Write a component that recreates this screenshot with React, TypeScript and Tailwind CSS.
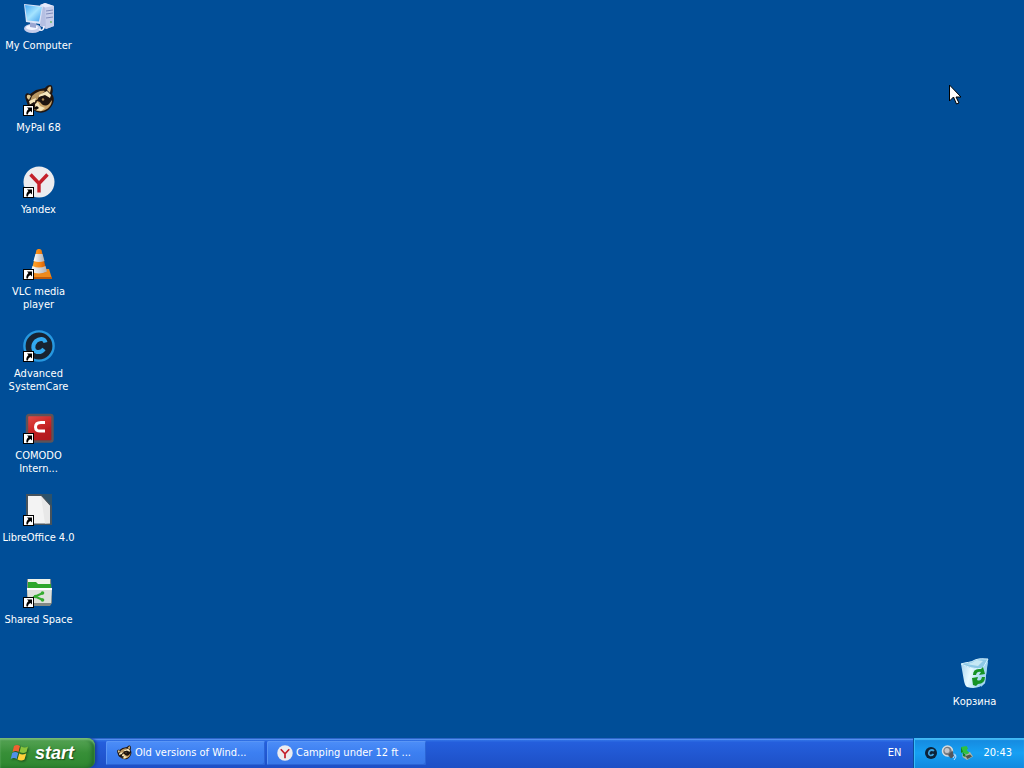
import type { ReactNode } from 'react';

function ShortcutArrow() {
  return (
    <g>
      <rect x="0.5" y="21.5" width="10" height="10" fill="#fff" stroke="#000" />
      <path d="M4 23.500h5v5l-1.500-1.500C5.500 28 5 29 5 30.500H3.500C3 28.500 3.700 26.700 5.500 25Z" fill="#000" />
    </g>
  );
}

function ComputerIcon() {
  return (
    <svg viewBox="0 0 32 32" className="size-8" aria-hidden="true">
      <defs>
        <linearGradient id="screen" x1="0" y1="0" x2="1" y2="1">
          <stop offset="0" stopColor="#45a9f5" />
          <stop offset="0.5" stopColor="#a5e4ff" />
          <stop offset="1" stopColor="#3c9cec" />
        </linearGradient>
      </defs>
      <path d="M17 3 22 1 31 4v20l-8 3-6-3Z" fill="#b5bfe2" />
      <path d="M22 5 31 4v20l-8 3Z" fill="#c5cdea" />
      <path d="M17 3 22 1 31 4 22 5.500Z" fill="#e6eafa" />
      <path d="m23 9 7-1M23 12l7-1M23 16l7-1" stroke="#7f8cbc" />
      <circle cx="28" cy="20" r="1" fill="#6fb96a" />
      <ellipse cx="9.500" cy="26.500" rx="8.500" ry="4.500" fill="#c6cdea" />
      <ellipse cx="9" cy="25.500" rx="6" ry="2.500" fill="#f3f5ff" />
      <path d="m7 20 6 1v5l-6-1Z" fill="#9ba7d2" />
      <path d="M1 2 20 4 17 22 3 20Z" fill="#dbe4f8" />
      <path d="M2 3 19 5 16 19.500 4 18.500Z" fill="url(#screen)" />
      <path d="M16 27c3 3 5 0 5-3" fill="none" stroke="#eef2ff" strokeWidth="1.500" />
    </svg>
  );
}

function Raccoon() {
  return (
    <g>
      <path d="M3 16C1 11 3 8 7 10L13 6 22 4C24 1 28 0 29 2c1 3 1 6 0 8 3 4 2 9-1 13-4 6-11 7-16 4L5 22Z" fill="#21150f" />
      <path d="M4 14c-1-4 2-4 4-2l-2 4Z" fill="#dcc48c" />
      <path d="M24 6c1-3 4-5 4-2l-1 5Z" fill="#e0c084" />
      <path d="M9 12c4-4 9-6 13-5l-5 5-3 4-7 1Z" fill="#b99762" />
      <path d="m6 17 7-3-1 4-5 3Z" fill="#f3e3b8" />
      <path d="m16 11 8-4 4 4-1 3-5-3-6 2Z" fill="#f6e8bf" />
      <path d="m14 17 3 1c2 3 5 5 9 2l3-4c0 5-4 10-10 11-4 1-7-1-8-2Z" fill="#caa368" />
      <path d="m12 20 3-2 2 4 5 2-4 3-5-1Z" fill="#f4e3b8" />
      <path d="M15 14c4-3 9-2 12 1l-2 5c-4 2-8-1-10-6Z" fill="#1c1310" />
      <path d="m6 21 5-3 1 4-4 2Z" fill="#1c1310" />
      <circle cx="20" cy="15.500" r="1.200" fill="#a88754" />
      <path d="m10 24 4-2 2 2-3 2Z" fill="#0d0908" />
    </g>
  );
}

function YandexMark() {
  return (
    <g>
      <circle cx="16" cy="16" r="15.500" fill="#ececef" />
      <path d="m7.500 8.500 8.500 9 8.500-9M16 16v10.500" fill="none" stroke="#c4202a" strokeWidth="3.400" />
    </g>
  );
}

function ConeIcon() {
  return (
    <svg viewBox="0 0 32 32" className="size-8" aria-hidden="true">
      <defs>
        <linearGradient id="cone">
          <stop offset="0" stopColor="#ffac32" />
          <stop offset="0.550" stopColor="#f68512" />
          <stop offset="1" stopColor="#c85708" />
        </linearGradient>
        <linearGradient id="cone-band">
          <stop offset="0" stopColor="#fff" />
          <stop offset="1" stopColor="#aeb1b6" />
        </linearGradient>
      </defs>
      <path d="M6 21h20l3 9.500H4Z" fill="#ee8a1d" />
      <path d="M4 29h25v2H4Z" fill="#bf5b0c" />
      <path d="M13.500 2c1-1.500 4-1.500 5 0L23.500 23c-3 4-12 4-15 0Z" fill="url(#cone)" />
      <path d="m12.500 6 7 0 2 7q-5.500 2-11 0Z" fill="url(#cone-band)" />
      <path d="m9.500 18q6.500 3 13 0l1.500 5.500q-8 4-16 0Z" fill="url(#cone-band)" />
      <ShortcutArrow />
    </svg>
  );
}

function SystemCareIcon() {
  return (
    <svg viewBox="0 0 32 32" className="size-8" aria-hidden="true">
      <circle cx="16" cy="16" r="14.600" fill="#182331" stroke="#2698e0" strokeWidth="2.400" />
      <path d="M22.500 12.500C21.500 8 16.500 8 13 11c-4 4-3.500 10 1 11 3 .5 5.500-1 7-3" fill="none" stroke="#32aaf1" strokeWidth="4" />
      <ShortcutArrow />
    </svg>
  );
}

function ComodoIcon() {
  return (
    <svg viewBox="0 0 32 32" className="size-8" aria-hidden="true">
      <defs>
        <linearGradient id="comodo" x1="0" y1="0" x2="0.500" y2="1">
          <stop offset="0" stopColor="#e2504b" />
          <stop offset="0.500" stopColor="#cf2a2a" />
          <stop offset="1" stopColor="#a61218" />
        </linearGradient>
      </defs>
      <rect x="4" y="3" width="25.500" height="26.500" rx="2" fill="url(#comodo)" stroke="#5d5358" strokeWidth="2.400" />
      <path d="M6 23 28 15v13H6Z" fill="#b91c20" opacity=".7" />
      <path d="M22 10.500h-4q-5.500 0-5.500 4.500t5.500 4h4" fill="none" stroke="#fff" strokeWidth="3" />
      <ShortcutArrow />
    </svg>
  );
}

function LibreOfficeIcon() {
  return (
    <svg viewBox="0 0 32 32" className="size-8" aria-hidden="true">
      <path d="M3 0h26v31H3Z" fill="#47535c" />
      <path d="M18 0h11v12Z" fill="#2d526b" />
      <path d="M5 2h13l9 10v17.500H5Z" fill="#f3f3f3" />
      <path d="m18 2 9 10v17l-5 .5Z" fill="#e8e8e8" />
      <ShortcutArrow />
    </svg>
  );
}

function SharedSpaceIcon() {
  return (
    <svg viewBox="0 0 32 32" className="size-8" aria-hidden="true">
      <path d="M4 3h24l1 24-2 3H6l-2-3Z" fill="#848984" />
      <path d="M5 3h22v8H5Z" fill="#eef3ea" />
      <path d="M5 6h8l2 2h13v5H5Z" fill="#2fa72c" />
      <path d="M4 12h25l-1 15H5Z" fill="#dde1dc" />
      <path d="M4 12h25v2H4Z" fill="#fff" />
      <path d="m20 17-8 3.500 8 3.500" fill="none" stroke="#35ac31" strokeWidth="2" />
      <circle cx="19.500" cy="17" r="1.800" fill="#35ac31" />
      <circle cx="12.500" cy="20.500" r="1.800" fill="#35ac31" />
      <circle cx="19.500" cy="24" r="1.800" fill="#35ac31" />
      <ShortcutArrow />
    </svg>
  );
}

function RecycleBinIcon() {
  return (
    <svg viewBox="0 0 32 32" className="size-8" aria-hidden="true">
      <defs>
        <linearGradient id="bin" x1="0" y1="0" x2="1" y2="0.300">
          <stop offset="0" stopColor="#a3d0ed" />
          <stop offset="0.450" stopColor="#e7faff" />
          <stop offset="1" stopColor="#8ccbed" />
        </linearGradient>
      </defs>
      <path d="M2 6C8 9 18 12 23 9L29 1 26 25q-7 7-18 4-2-1-3-6Z" fill="url(#bin)" />
      <path d="M2 6c5-2 10-1 14-4 5-2 9-1 13-1l-5 9c-7 2-15-1-22-4Z" fill="#8dc8e6" stroke="#d7f3ff" />
      <path d="M7 6c5 0 8-3 11-4l6 1-5 5Z" fill="#c6e8f5" />
      <path d="m24 10-2 19 4-4 3-22Z" fill="#a5d7f1" />
      <path d="M14 17q0-6 6-6h2l2-2 2 7-6 1 2-3q-4-1-5 3ZM13 20l6-1-1 3q4 2 5-3h3q0 7-7 7l-2 2-3-1Z" fill="#169326" />
    </svg>
  );
}

function WindowsFlag() {
  return (
    <svg viewBox="0 0 20 20" className="size-5 drop-shadow-[1px_1px_1px_#174b18]" aria-hidden="true">
      <path d="M4 3q3-2 6 0L8.500 9q-3-2-6 0Z" fill="#ef6131" />
      <path d="M11 3.500q4 2 7 0L16.500 9q-3 2-7 0Z" fill="#8ac43c" />
      <path d="M2.200 10q3-2 6 0l-1.500 6q-3-2-6 0Z" fill="#5091e8" />
      <path d="M9.200 10.500q3 2 7 0l-1.700 6q-3 2-7 0Z" fill="#ffd13b" />
    </svg>
  );
}

function SmallIcon({ children }: { children: ReactNode }) {
  return (
    <svg viewBox="0 0 32 32" className="size-4 shrink-0" aria-hidden="true">
      {children}
    </svg>
  );
}

function DesktopItem({ icon, label }: { icon: ReactNode; label: string }) {
  return (
    <button
      type="button"
      className="flex w-[77px] flex-col items-center gap-[5px] self-start text-center leading-[13px] text-white"
    >
      {icon}
      <span className="whitespace-pre-line">{label}</span>
    </button>
  );
}

function TaskButton({ icon, label }: { icon: ReactNode; label: string }) {
  return (
    <button
      type="button"
      className="flex h-6 w-[159px] items-center gap-[3px] rounded-[2px] bg-linear-to-b from-[#4d8ef8] via-[#3c7ff1] to-[#3878e8] pl-2.5 whitespace-nowrap text-white shadow-[inset_1px_1px_0_#5a96f6,inset_-1px_-1px_0_#2b65d6]"
    >
      {icon}
      <span>{label}</span>
    </button>
  );
}

const shortcuts: { label: string; icon: ReactNode }[] = [
  { label: 'My Computer', icon: <ComputerIcon /> },
  {
    label: 'MyPal 68',
    icon: (
      <svg viewBox="0 0 32 32" className="size-8" aria-hidden="true">
        <Raccoon />
        <ShortcutArrow />
      </svg>
    ),
  },
  {
    label: 'Yandex',
    icon: (
      <svg viewBox="0 0 32 32" className="size-8" aria-hidden="true">
        <YandexMark />
        <ShortcutArrow />
      </svg>
    ),
  },
  { label: 'VLC media\nplayer', icon: <ConeIcon /> },
  { label: 'Advanced\nSystemCare', icon: <SystemCareIcon /> },
  { label: 'COMODO\nIntern...', icon: <ComodoIcon /> },
  { label: 'LibreOffice 4.0', icon: <LibreOfficeIcon /> },
  { label: 'Shared Space', icon: <SharedSpaceIcon /> },
];

function Tray() {
  return (
    <div className="flex h-full items-center bg-linear-to-b from-[#1687dd] via-[#16a0f3] to-[#1189df] pr-3 pl-[10px] text-white shadow-[inset_1px_0_0_#0b4e9c,inset_2px_0_0_#36bcfa,inset_0_2px_1px_#42baf5]">
      <div className="flex items-center gap-0.5">
        <SmallIcon>
          <circle cx="16" cy="16" r="12" fill="#0c2238" />
          <path d="M22 12q-4-4-9 0-4 7 2 9 4 0 6-3" fill="none" stroke="#3fa2dc" strokeWidth="3.400" />
        </SmallIcon>
        <SmallIcon>
          <circle cx="13" cy="12" r="10" fill="#777b80" stroke="#d9dcdf" strokeWidth="3" />
          <circle cx="12" cy="11" r="5" fill="#c3c5ca" />
          <path d="m14 20 9-9 3 12-6 4Z" fill="#53565d" />
          <path d="M26 17q3 4-2 9M29 19q3 5-3 11" fill="none" stroke="#c9e2ff" strokeWidth="2" />
        </SmallIcon>
        <SmallIcon>
          <path d="m7 18 15-4 6 9-12 7-9-6Z" fill="#aeb5a8" />
          <path d="m13 22 9-3 4 4-9 5Z" fill="#4d554d" />
          <path d="M4 4 15 2l3 5-3 3 6 6-6 3-6-4-2 3Z" fill="#2fc23f" />
          <path d="M4 4v12l4-3v9l5 2v-5l-4-3Z" fill="#128524" />
        </SmallIcon>
      </div>
      <time className="ml-2">20:43</time>
    </div>
  );
}

export default function App() {
  return (
    <div className="relative flex min-h-screen flex-col bg-[#004e98] font-['DejaVu_Sans_Condensed','DejaVu_Sans',sans-serif] text-[11px]">
      <main className="flex flex-1 justify-between">
        <div className="grid auto-rows-[82px] content-start pt-0.5">
          {shortcuts.map((item) => (
            <DesktopItem key={item.label} icon={item.icon} label={item.label} />
          ))}
        </div>
        <div className="flex flex-col justify-end pr-[11px] pb-[30px]">
          <DesktopItem icon={<RecycleBinIcon />} label="Корзина" />
        </div>
      </main>

      <svg viewBox="0 0 12 21" className="absolute top-[84px] right-[63px] h-[21px] w-3" aria-hidden="true">
        <path d="M.5 1v16l4-4 3 7 2.500-1-3-6h5Z" fill="#fff" stroke="#000" />
      </svg>

      <footer className="flex h-[30px] items-center bg-linear-to-b from-[#3d82ed] from-0% via-[#245edc] via-15% to-[#1d4fc5] shadow-[inset_0_1px_0_#2c65ca,inset_0_2px_0_#5390ef]">
        <button
          type="button"
          className="flex h-full w-[95px] items-center gap-[5px] rounded-r-[8px] bg-linear-to-b from-[#58a557] via-[#378f37] to-[#2e8730] pl-2.5 font-['Liberation_Sans',Arial,sans-serif] text-[18px] leading-none font-bold text-white italic shadow-[inset_0_2px_2px_#76bd75,inset_-3px_0_4px_#216a2a,2px_0_3px_#193f9e] text-shadow-[1px_1px_1px_#1e4a1d]"
        >
          <WindowsFlag />
          <span>start</span>
        </button>
        <nav className="flex flex-1 gap-0.5 pl-[11px]" aria-label="Open windows">
          <TaskButton
            icon={
              <SmallIcon>
                <Raccoon />
              </SmallIcon>
            }
            label="Old versions of Wind..."
          />
          <TaskButton
            icon={
              <SmallIcon>
                <YandexMark />
              </SmallIcon>
            }
            label="Camping under 12 ft ..."
          />
        </nav>
        <button type="button" className="px-3 text-white">
          EN
        </button>
        <Tray />
      </footer>
    </div>
  );
}
